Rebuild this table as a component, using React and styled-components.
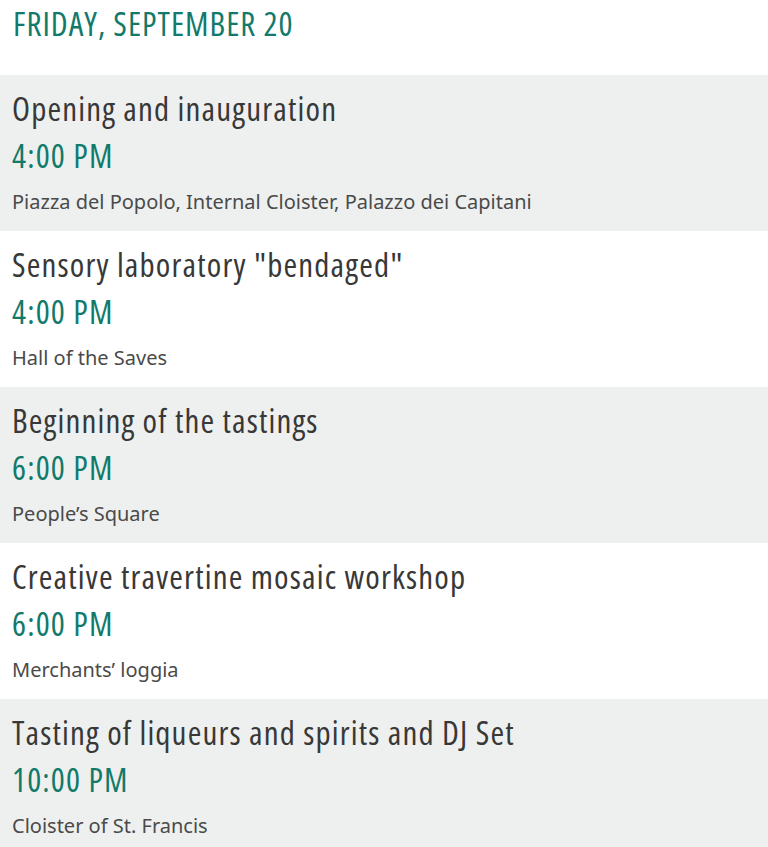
import React from 'react'
import styled, { createGlobalStyle } from 'styled-components'

const GlobalStyle = createGlobalStyle`
  body {
    margin: 0;
    background: #ffffff;
    font-family: "Noto Sans", "DejaVu Sans", sans-serif;
  }
`

const events = [
  { title: 'Opening and inauguration', time: '4:00 PM', place: 'Piazza del Popolo, Internal Cloister, Palazzo dei Capitani' },
  { title: 'Sensory laboratory "bendaged"', time: '4:00 PM', place: 'Hall of the Saves' },
  { title: 'Beginning of the tastings', time: '6:00 PM', place: 'People\u2019s Square' },
  { title: 'Creative travertine mosaic workshop', time: '6:00 PM', place: 'Merchants\u2019 loggia' },
  { title: 'Tasting of liqueurs and spirits and DJ Set', time: '10:00 PM', place: 'Cloister of St. Francis' },
]

const Page = () => {
  return (
    <Wrapper>
      <GlobalStyle />
      <DayHeading>FRIDAY, SEPTEMBER 20</DayHeading>
      <EventList>
        {events.map((ev, i) => (
          <EventRow key={i} $shaded={i % 2 === 0}>
            <EventTitle>{ev.title}</EventTitle>
            <EventTime>{ev.time}</EventTime>
            <EventPlace>{ev.place}</EventPlace>
          </EventRow>
        ))}
      </EventList>
    </Wrapper>
  )
}

const Wrapper = styled.div`
  width: 768px;
  min-height: 847px;
  overflow: hidden;
`

// condensed display face (Open Sans condensed width)
const condensedText = `
  font-family: "Open Sans", sans-serif;
  font-stretch: condensed;
  font-weight: 500;
  font-size: 33px;
  letter-spacing: 1.15px;
  line-height: 36px;
`

const DayHeading = styled.h2`
  margin: 0 0 33px;
  padding: 6px 13px 0;
  ${condensedText}
  letter-spacing: 1px;
  color: #127a6b;
`

const EventList = styled.div`
  display: flex;
  flex-direction: column;
`

const EventRow = styled.div`
  height: 156px;
  box-sizing: border-box;
  padding: 16px 12px 0;
  display: flex;
  flex-direction: column;
  background: ${p => (p.$shaded ? '#eef0ef' : '#ffffff')};
`

const EventTitle = styled.div`
  ${condensedText}
  color: #383838;
`

const EventTime = styled.div`
  margin-top: 11px;
  ${condensedText}
  color: #127a6b;
`

const EventPlace = styled.div`
  margin-top: 16px;
  font-size: 20px;
  line-height: 24px;
  color: #4a4a4a;
`

export default Page
